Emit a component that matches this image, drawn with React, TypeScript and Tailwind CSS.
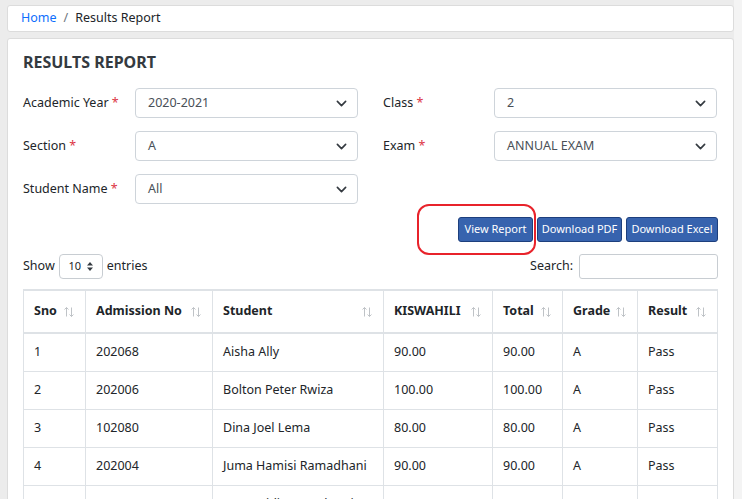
import React from 'react';

const rows = [
  { sno: '1', adm: '202068', name: 'Aisha Ally', kis: '90.00', total: '90.00', grade: 'A', result: 'Pass' },
  { sno: '2', adm: '202006', name: 'Bolton Peter Rwiza', kis: '100.00', total: '100.00', grade: 'A', result: 'Pass' },
  { sno: '3', adm: '102080', name: 'Dina Joel Lema', kis: '80.00', total: '80.00', grade: 'A', result: 'Pass' },
  { sno: '4', adm: '202004', name: 'Juma Hamisi Ramadhani', kis: '90.00', total: '90.00', grade: 'A', result: 'Pass' },
  { sno: '5', adm: '202011', name: 'Mwanaidi Juma Khamis', kis: '85.00', total: '85.00', grade: 'A', result: 'Pass' },
];

const columns = [
  { label: 'Sno', w: 'w-[62px]' },
  { label: 'Admission No', w: 'w-[127px]' },
  { label: 'Student', w: 'w-[171px]' },
  { label: 'KISWAHILI', w: 'w-[109px]' },
  { label: 'Total', w: 'w-[70px]' },
  { label: 'Grade', w: 'w-[75px]' },
  { label: 'Result', w: 'w-[80px]' },
];

const buttons = [
  { label: 'View Report', w: 'w-[75px]' },
  { label: 'Download PDF', w: 'w-[85px]' },
  { label: 'Download Excel', w: 'w-[92px]' },
];

function Chevron() {
  return (
    <svg width="11" height="11" viewBox="0 0 16 16" className="text-[#343a40]">
      <path d="M2 5l6 6 6-6" fill="none" stroke="currentColor" strokeWidth="2.4" strokeLinecap="round" strokeLinejoin="round" />
    </svg>
  );
}

function SelectBox({ value, w }: { value: string; w: string }) {
  return (
    <div className={`${w} h-[30px] border border-[#ced4da] rounded-[4px] bg-white flex items-center justify-between pl-[12px] pr-[10px] text-[12.5px] text-[#495057]`}>
      <span>{value}</span>
      <Chevron />
    </div>
  );
}

function Label({ text, w }: { text: string; w: string }) {
  return (
    <div className={`${w} text-[12.5px] text-[#212529]`}>
      {text} <span className="text-[#dc3545]">*</span>
    </div>
  );
}

function SortIcon() {
  return (
    <svg width="12" height="12" viewBox="0 0 12 12" className="text-[#bfc3c7] shrink-0">
      <path d="M3.5 1.5v9M1.5 3.5l2-2 2 2M8.5 1.5v9M6.5 8.5l2 2 2-2" fill="none" stroke="currentColor" strokeWidth="1" />
    </svg>
  );
}

export default function App() {
  return (
    <div className="w-[742px] h-[499px] overflow-hidden bg-[#ececec] flex font-['Noto_Sans',sans-serif]">
      <div className="w-[734px] pl-[7px] pt-[5px] flex flex-col gap-[6px]">
        {/* Breadcrumb */}
        <div className="shrink-0 h-[27px] bg-white border border-[#dcdcdc] rounded-[3px] flex items-center px-[13px] text-[12.5px] text-[#212529]">
          <span className="text-[#0d6efd]">Home</span>
          <span className="mx-[7px] text-[#6c757d]">/</span>
          <span>Results Report</span>
        </div>

        {/* Main card */}
        <div className="flex-1 bg-white border border-[#dcdcdc] rounded-[3px] px-[15px] pt-[13px]">
          <h1 className="text-[16px] font-bold text-[#343a40] leading-[20px]">RESULTS REPORT</h1>

          <div className="mt-[16px] flex flex-col gap-[13px]">
            <div className="flex items-center">
              <Label text="Academic Year" w="w-[112px]" />
              <SelectBox value="2020-2021" w="w-[223px]" />
              <div className="w-[25px]" />
              <Label text="Class" w="w-[111px]" />
              <SelectBox value="2" w="w-[223px]" />
            </div>
            <div className="flex items-center">
              <Label text="Section" w="w-[112px]" />
              <SelectBox value="A" w="w-[223px]" />
              <div className="w-[25px]" />
              <Label text="Exam" w="w-[111px]" />
              <SelectBox value="ANNUAL EXAM" w="w-[223px]" />
            </div>
            <div className="flex items-center">
              <Label text="Student Name" w="w-[112px]" />
              <SelectBox value="All" w="w-[223px]" />
            </div>
          </div>

          {/* Buttons */}
          <div className="mt-[13px] flex justify-end gap-[4px] relative">
            <div className="absolute left-[394px] top-[-13px] w-[119px] h-[51px] border-2 border-[#e8232b] rounded-[12px]" />
            {buttons.map((b) => (
              <button
                key={b.label}
                className={`${b.w} h-[25px] bg-[#3763ae] border border-[#1d3f7d] rounded-[3px] text-white text-[11px] whitespace-nowrap`}
              >
                {b.label}
              </button>
            ))}
          </div>

          {/* Show / Search */}
          <div className="mt-[12px] flex items-center justify-between text-[12.5px] text-[#212529]">
            <div className="flex items-center gap-[4px]">
              <span>Show</span>
              <div className="w-[44px] h-[25px] border border-[#c8cdd2] rounded-[4px] flex items-center justify-center gap-[6px] text-[11px]">
                <span>10</span>
                <svg width="6" height="9" viewBox="0 0 6 9" className="text-[#343a40]">
                  <path d="M3 0L6 3.5H0zM3 9L0 5.5h6z" fill="currentColor" />
                </svg>
              </div>
              <span>entries</span>
            </div>
            <div className="flex items-center gap-[6px]">
              <span>Search:</span>
              <div className="w-[139px] h-[25px] border border-[#c8cdd2] rounded-[3px]" />
            </div>
          </div>

          {/* Table */}
          <table className="mt-[10px] border-collapse text-[12.5px] text-[#212529] w-[694px] table-fixed">
            <thead>
              <tr className="border-t-2 border-b-2 border-[#dee2e6]">
                {columns.map((c) => (
                  <th key={c.label} className={`${c.w} h-[43px] border-x border-[#dee2e6] px-[10px] text-left font-bold`}>
                    <div className="flex items-center justify-between">
                      <span>{c.label}</span>
                      <SortIcon />
                    </div>
                  </th>
                ))}
              </tr>
            </thead>
            <tbody>
              {rows.map((r) => (
                <tr key={r.sno} className="border-b border-[#dee2e6]">
                  {[r.sno, r.adm, r.name, r.kis, r.total, r.grade, r.result].map((v, i) => (
                    <td key={i} className="h-[38px] border-x border-[#dee2e6] px-[10px]">
                      {v}
                    </td>
                  ))}
                </tr>
              ))}
            </tbody>
          </table>
        </div>
      </div>
      <div className="w-[8px] bg-[#f4f4f4]" />
    </div>
  );
}
